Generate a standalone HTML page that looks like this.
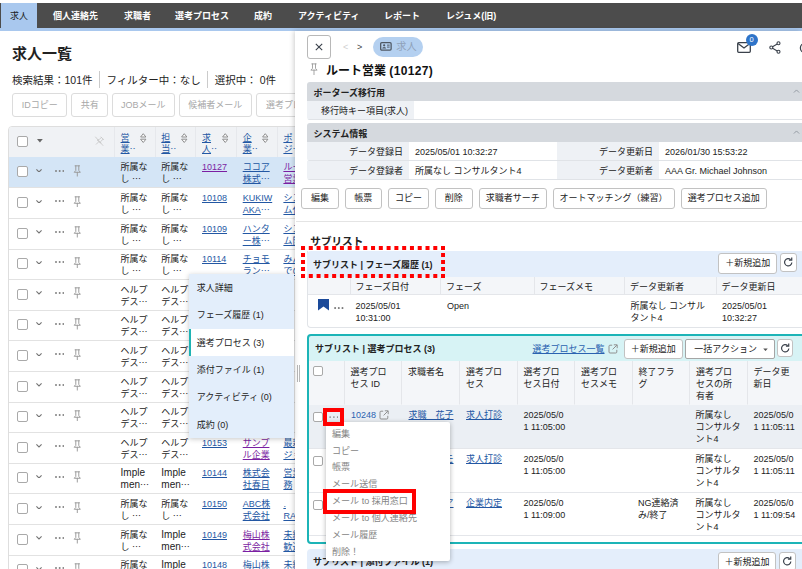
<!DOCTYPE html>
<html lang="ja">
<head>
<meta charset="utf-8">
<title>求人一覧</title>
<style>
*{box-sizing:border-box;margin:0;padding:0}
html,body{width:802px;height:569px;overflow:hidden;background:#fff}
body{font-family:"Liberation Sans","Noto Sans CJK JP",sans-serif;font-size:9px;line-height:11px;color:#222;position:relative}
.abs{position:absolute}
a{color:#2357a3;text-decoration:underline}
a.v{color:#7b1fa2}
svg{display:block}
/* nav */
#nav{position:absolute;left:0;top:3.3px;width:802px;height:24.5px;background:#4c4c4c}
#navline{position:absolute;left:0;top:27.7px;width:802px;height:3.2px;background:#a9c8ee}
#nav span{position:absolute;top:0;height:24.5px;line-height:26.5px;color:#fff;font-weight:700;font-size:9px;white-space:nowrap}
#nav .act{left:1px;width:36px;background:#a9c8ee;color:#222;text-align:center;height:25px;font-weight:400}
/* left */
#ltitle{position:absolute;left:12px;top:42px;font-size:15px;line-height:24px;font-weight:700;color:#222;white-space:nowrap}
#lstat{position:absolute;left:12px;top:70px;font-size:10.5px;line-height:20px;color:#222;white-space:nowrap}
#lstat i{display:inline-block;width:1px;height:17.5px;background:#cbcbcb;vertical-align:middle;margin:0 7px 0 6px;position:relative;top:-1.8px}
.dbtn{position:absolute;top:93px;height:24px;border:1px solid #dcdcdc;border-radius:3px;background:#fff;color:#a8a8a8;font-size:9px;line-height:22px;text-align:center;white-space:nowrap}
#ltab{position:absolute;left:8px;top:126px;width:300px;height:450px;border:1px solid #dedede;border-radius:4px 0 0 0;overflow:hidden}
#lhead{position:absolute;left:0;top:0;width:300px;height:30px;background:#f0f2f5}
.lr{position:absolute;left:0;width:300px;height:31px;box-shadow:inset 0 1px 0 #e2e2e2;background:#fff}
.lr.sel{background:#d4e5f6;box-shadow:none}
.lr span,.lr a,#lhead a,#lhead span{position:absolute;white-space:nowrap;line-height:12px}
.lr span.j,#lhead span.j{position:static}
.cb{position:absolute;width:12px;height:12px;border:1.2px solid #a9a9a9;border-radius:2px;background:#fff}
.sort{width:6.5px;height:10.2px}
.pin{width:8.6px;height:11.6px}
.chev{width:6px;height:3.4px}
.dots{width:9.4px;height:2px}
.j{display:inline-block}
.j.h{width:6px;overflow:hidden;vertical-align:top;height:12px}
.hs{position:absolute;top:0;width:1px;height:30px;background:#e6e8ec}
/* popup */
#pop{position:absolute;left:188.8px;top:273.8px;width:105.5px;height:164.2px;background:#e3eefb;box-shadow:0 1px 5px rgba(0,0,0,.22)}
#pop div{position:absolute;left:0;width:105.5px;height:27.4px;line-height:28px;padding-left:8px;font-size:9px;color:#222;white-space:nowrap}
#pop div.on{background:#fff;border-left:2px solid #1fb3b3;padding-left:6px}
/* right panel */
#rp{position:absolute;left:296px;top:30.9px;width:506px;height:539px;background:#fff;box-shadow:-1px 0 0 #fff,-2px 0 5px rgba(0,0,0,.2)}
#rp>*{margin-top:-30.9px}
#rshadow{display:none}
#grip{position:absolute;left:0.5px;top:364.5px;width:4px;height:17.5px}
#grip i{position:absolute;top:0;width:1px;height:17.5px;background:#b8b8b8}
#grip i+i{left:2px}
#xbtn{position:absolute;left:11px;top:35px;width:24px;height:23.6px;border:1px solid #b8b8b8;border-radius:3px;background:#fff}
#pill{position:absolute;left:77px;top:37.2px;width:50px;height:19.4px;border-radius:10px;background:#b4d0f0}
#pill span{position:absolute;left:23.3px;top:0;line-height:19.8px;font-size:10.2px;color:#8fa1b8;white-space:nowrap}
#rtitle{position:absolute;left:30px;top:61.7px;font-size:12px;line-height:19px;font-weight:700;color:#111;white-space:nowrap}
#badge{position:absolute;left:449.8px;top:33.8px;width:11.8px;height:11.8px;border-radius:6px;background:#2f74c9;color:#fff;font-size:7.5px;line-height:11.8px;text-align:center}
.sech{position:absolute;left:11px;width:495px;height:19.5px;background:#d5d9de;border-radius:3px 0 0 0;padding-left:6.5px;font-weight:700;font-size:9px;line-height:22px;color:#222;white-space:nowrap}
.sech svg{position:absolute;left:486px;top:7px;width:7px;height:4.5px}
.frow{position:absolute;left:11px;width:495px;border-radius:0 0 0 3px;overflow:hidden;height:18.5px}
.frow:after{content:'';position:absolute;left:0;bottom:0;width:100%;height:1px;background:#e0e3e7}
.frow .fl{position:absolute;top:0;height:100%;background:#eef1f5;text-align:right;padding-right:6px;line-height:20px;white-space:nowrap}
.frow .fv{position:absolute;top:0;line-height:20px;white-space:nowrap}
.btn{position:absolute;height:20.6px;border:1px solid #c2c2c2;border-radius:3px;background:#fff;color:#222;font-size:9px;line-height:19.6px;text-align:center;white-space:nowrap}
.btn.rf{width:16.6px;height:18.6px}
.btn.rf svg{position:absolute;left:2.6px;top:3.2px;width:10.4px;height:10.4px}
#sl1{position:absolute;left:11px;top:251.2px;width:495px;height:76.4px;border-left:1px solid #e1e4e8;border-bottom:1px solid #e1e4e8;border-radius:0 0 0 4px;}
#sl1:before{content:'';position:absolute;left:-1px;top:0;width:496px;height:25.8px;background:#e4eefb;border-radius:4px 0 0 0}
.slh{position:absolute;left:5px;top:0;line-height:28px;font-weight:700;font-size:9px;color:#222;white-space:nowrap}
.th{position:absolute;background:#f4f6f9;border-right:1px solid #e4e6ea;border-bottom:1px solid #e4e6ea;padding:5.3px 0 0 6px;line-height:12px;color:#222;white-space:nowrap}
#sl1 .th{padding-top:4.2px;padding-left:5px}
.td{position:absolute;line-height:12px;white-space:nowrap}
#dot1{position:absolute;left:5px;top:246px;width:144.1px;height:31.9px}
#sl2{position:absolute;left:11px;top:334.2px;width:500px;height:209.6px;border:2px solid #1cb4b7;border-radius:4px;background:linear-gradient(#d7f3f5,#d7f3f5) 0 0/100% 25px no-repeat}
#sl2 .slh{line-height:26px;left:6px}
.tr{position:absolute;left:0;width:500px;border-bottom:1px solid #e4e6ea;background:#fff}
.tr.hov{background:#ebeff4}
#sl2 .td{line-height:12px}
.ext{width:10px;height:10px}
#sl3{position:absolute;left:11px;top:548.5px;width:495px;height:30px;background:#e4eefb;border-radius:4px 0 0 0}
#ctx{position:absolute;left:30px;top:422.3px;width:124px;height:139px;background:#fff;border-radius:2px;box-shadow:0 1px 5px rgba(0,0,0,.3);padding-top:3.5px}
#ctx div{height:16.85px;line-height:16.85px;padding-left:6px;color:#858585;font-size:9.05px;white-space:nowrap}
.red{position:absolute;border:3px solid #ff0000}
.rd{width:9.6px;height:2.2px}
.n{font-weight:400;font-size:10px}
#sl2 .th{border-bottom-color:#f4f6f9;height:44.5px !important}
.tr>*{margin-top:-1px}
</style>
</head>
<body>
<div id="nav">
<span class="act">求人</span>
<span style="left:53px">個人連絡先</span>
<span style="left:124px">求職者</span>
<span style="left:175px">選考プロセス</span>
<span style="left:254px">成約</span>
<span style="left:298px">アクティビティ</span>
<span style="left:384px">レポート</span>
<span style="left:446px">レジュメ(旧)</span>
</div>
<div id="navline"></div>

<div id="ltitle">求人一覧</div>
<div id="lstat">検索結果：101件<i></i>フィルター中：なし<i></i>選択中： 0件</div>
<div class="dbtn" style="left:12.2px;width:55.3px">IDコピー</div>
<div class="dbtn" style="left:71.2px;width:37px">共有</div>
<div class="dbtn" style="left:111.5px;width:63.6px">JOBメール</div>
<div class="dbtn" style="left:178.8px;width:73px">候補者メール</div>
<div class="dbtn" style="left:256px;width:80px;text-align:left;padding-left:9px">選考プロセス</div>

<div id="ltab">
<div id="lhead">
<div class="cb" style="left:7.5px;top:8.7px;width:11.5px;height:11.5px"></div>
<svg class="abs" style="left:27.8px;top:12.4px;width:5.8px;height:3.4px" viewBox="0 0 5.8 3.4"><path d="M0 0 H5.8 L2.9 3.4 Z" fill="#666"/></svg>
<svg class="abs" style="left:84.5px;top:8.5px;width:10.5px;height:10.5px" viewBox="0 0 12 12"><g transform="rotate(45 6 6)"><path d="M4 1.2 H8 M4.6 1.2 V5 L3.4 6.6 H8.6 L7.4 5 V1.2 M6 6.6 V10.8" fill="none" stroke="#c6c6c6" stroke-width="0.9" stroke-linecap="round" stroke-linejoin="round"/></g><path d="M1.8 1.2 L10.2 10.8" stroke="#c6c6c6" stroke-width="0.9" stroke-linecap="round"/></svg>
<a style="left:111.6px;top:4.5px">営</a><a style="left:111.6px;top:16.3px">業<span class="j h">⋯</span></a>
<span style="left:131.3px;top:5.9px"><svg class="sort" viewBox="0 0 6.5 10.2"><path d="M3.25 0.7 L5.9 4 H0.6 Z M3.25 9.5 L0.6 6.2 H5.9 Z" fill="#fff" stroke="#8e8e8e" stroke-width="1" stroke-linejoin="round"/></svg></span>
<a style="left:152.3px;top:4.5px">担</a><a style="left:152.3px;top:16.3px">当<span class="j h">⋯</span></a>
<span style="left:172.0px;top:5.9px"><svg class="sort" viewBox="0 0 6.5 10.2"><path d="M3.25 0.7 L5.9 4 H0.6 Z M3.25 9.5 L0.6 6.2 H5.9 Z" fill="#fff" stroke="#8e8e8e" stroke-width="1" stroke-linejoin="round"/></svg></span>
<a style="left:193.0px;top:4.5px">求</a><a style="left:193.0px;top:16.3px">人<span class="j h">⋯</span></a>
<span style="left:212.7px;top:5.9px"><svg class="sort" viewBox="0 0 6.5 10.2"><path d="M3.25 0.7 L5.9 4 H0.6 Z M3.25 9.5 L0.6 6.2 H5.9 Z" fill="#fff" stroke="#8e8e8e" stroke-width="1" stroke-linejoin="round"/></svg></span>
<a style="left:233.7px;top:4.5px">企</a><a style="left:233.7px;top:16.3px">業<span class="j h">⋯</span></a>
<span style="left:253.4px;top:5.9px"><svg class="sort" viewBox="0 0 6.5 10.2"><path d="M3.25 0.7 L5.9 4 H0.6 Z M3.25 9.5 L0.6 6.2 H5.9 Z" fill="#fff" stroke="#8e8e8e" stroke-width="1" stroke-linejoin="round"/></svg></span>
<a style="left:274.4px;top:4.5px">ポ</a><a style="left:274.4px;top:16.3px">ジ<span class="j h">⋯</span></a>
<span style="left:294.1px;top:5.9px"><svg class="sort" viewBox="0 0 6.5 10.2"><path d="M3.25 0.7 L5.9 4 H0.6 Z M3.25 9.5 L0.6 6.2 H5.9 Z" fill="#fff" stroke="#8e8e8e" stroke-width="1" stroke-linejoin="round"/></svg></span>
<i class="hs" style="left:105.0px"></i>
<i class="hs" style="left:145.7px"></i>
<i class="hs" style="left:186.4px"></i>
<i class="hs" style="left:227.1px"></i>
<i class="hs" style="left:267.8px"></i>
</div>
<div class="lr sel" style="top:29.8px">
<div class="cb" style="left:7.5px;top:9.5px;width:11.5px;height:11px"></div>
<span style="left:27px;top:12.3px"><svg class="chev" viewBox="0 0 6 3.4"><path d="M0.4 0.4 L3 3 L5.6 0.4" fill="none" stroke="#747474" stroke-width="1.1"/></svg></span>
<span style="left:45.6px;top:12.8px"><svg class="dots" viewBox="0 0 9.4 2"><circle cx="1" cy="1" r="1" fill="#828282"/><circle cx="4.7" cy="1" r="1" fill="#828282"/><circle cx="8.4" cy="1" r="1" fill="#828282"/></svg></span>
<span style="left:63.8px;top:8.2px"><svg class="pin" viewBox="0 0 10 14"><path d="M2.3 1 H7.7 M3.2 1 V6.6 L1.3 8.8 H8.7 L6.8 6.6 V1 M5 8.8 V13.4" fill="none" stroke="#999" stroke-width="1.15" stroke-linejoin="round" stroke-linecap="round"/></svg></span>
<span style="left:111.6px;top:4.5px">所属な</span><span style="left:111.6px;top:16.5px">し <span class="j">⋯</span></span>
<span style="left:152.3px;top:4.5px">所属な</span><span style="left:152.3px;top:16.5px">し <span class="j">⋯</span></span>
<a class="v" style="left:193.0px;top:4.5px">10127</a>
<a class="" style="left:233.7px;top:4.5px">ココア</a><a class="" style="left:233.7px;top:16.5px">株式<span class="j">⋯</span></a>
<a class="v" style="left:274.4px;top:4.5px">ルート</a><a class="v" style="left:274.4px;top:16.5px">営業</a>
</div>
<div class="lr " style="top:60.4px">
<div class="cb" style="left:7.5px;top:9.5px;width:11.5px;height:11px"></div>
<span style="left:27px;top:12.3px"><svg class="chev" viewBox="0 0 6 3.4"><path d="M0.4 0.4 L3 3 L5.6 0.4" fill="none" stroke="#747474" stroke-width="1.1"/></svg></span>
<span style="left:45.6px;top:12.8px"><svg class="dots" viewBox="0 0 9.4 2"><circle cx="1" cy="1" r="1" fill="#828282"/><circle cx="4.7" cy="1" r="1" fill="#828282"/><circle cx="8.4" cy="1" r="1" fill="#828282"/></svg></span>
<span style="left:63.8px;top:8.2px"><svg class="pin" viewBox="0 0 10 14"><path d="M2.3 1 H7.7 M3.2 1 V6.6 L1.3 8.8 H8.7 L6.8 6.6 V1 M5 8.8 V13.4" fill="none" stroke="#999" stroke-width="1.15" stroke-linejoin="round" stroke-linecap="round"/></svg></span>
<span style="left:111.6px;top:4.5px">所属な</span><span style="left:111.6px;top:16.5px">し <span class="j">⋯</span></span>
<span style="left:152.3px;top:4.5px">所属な</span><span style="left:152.3px;top:16.5px">し <span class="j">⋯</span></span>
<a class="" style="left:193.0px;top:4.5px">10108</a>
<a class="" style="left:233.7px;top:4.5px">KUKIW</a><a class="" style="left:233.7px;top:16.5px">AKA<span class="j">⋯</span></a>
<a class="" style="left:274.4px;top:4.5px">シス</a><a class="" style="left:274.4px;top:16.5px">ム化</a>
</div>
<div class="lr " style="top:91.0px">
<div class="cb" style="left:7.5px;top:9.5px;width:11.5px;height:11px"></div>
<span style="left:27px;top:12.3px"><svg class="chev" viewBox="0 0 6 3.4"><path d="M0.4 0.4 L3 3 L5.6 0.4" fill="none" stroke="#747474" stroke-width="1.1"/></svg></span>
<span style="left:45.6px;top:12.8px"><svg class="dots" viewBox="0 0 9.4 2"><circle cx="1" cy="1" r="1" fill="#828282"/><circle cx="4.7" cy="1" r="1" fill="#828282"/><circle cx="8.4" cy="1" r="1" fill="#828282"/></svg></span>
<span style="left:63.8px;top:8.2px"><svg class="pin" viewBox="0 0 10 14"><path d="M2.3 1 H7.7 M3.2 1 V6.6 L1.3 8.8 H8.7 L6.8 6.6 V1 M5 8.8 V13.4" fill="none" stroke="#999" stroke-width="1.15" stroke-linejoin="round" stroke-linecap="round"/></svg></span>
<span style="left:111.6px;top:4.5px">所属な</span><span style="left:111.6px;top:16.5px">し <span class="j">⋯</span></span>
<span style="left:152.3px;top:4.5px">所属な</span><span style="left:152.3px;top:16.5px">し <span class="j">⋯</span></span>
<a class="" style="left:193.0px;top:4.5px">10109</a>
<a class="" style="left:233.7px;top:4.5px">ハンタ</a><a class="" style="left:233.7px;top:16.5px">ー株<span class="j">⋯</span></a>
<a class="" style="left:274.4px;top:4.5px">シス</a><a class="" style="left:274.4px;top:16.5px">ム開</a>
</div>
<div class="lr " style="top:121.6px">
<div class="cb" style="left:7.5px;top:9.5px;width:11.5px;height:11px"></div>
<span style="left:27px;top:12.3px"><svg class="chev" viewBox="0 0 6 3.4"><path d="M0.4 0.4 L3 3 L5.6 0.4" fill="none" stroke="#747474" stroke-width="1.1"/></svg></span>
<span style="left:45.6px;top:12.8px"><svg class="dots" viewBox="0 0 9.4 2"><circle cx="1" cy="1" r="1" fill="#828282"/><circle cx="4.7" cy="1" r="1" fill="#828282"/><circle cx="8.4" cy="1" r="1" fill="#828282"/></svg></span>
<span style="left:63.8px;top:8.2px"><svg class="pin" viewBox="0 0 10 14"><path d="M2.3 1 H7.7 M3.2 1 V6.6 L1.3 8.8 H8.7 L6.8 6.6 V1 M5 8.8 V13.4" fill="none" stroke="#999" stroke-width="1.15" stroke-linejoin="round" stroke-linecap="round"/></svg></span>
<span style="left:111.6px;top:4.5px">所属な</span><span style="left:111.6px;top:16.5px">し <span class="j">⋯</span></span>
<span style="left:152.3px;top:4.5px">所属な</span><span style="left:152.3px;top:16.5px">し <span class="j">⋯</span></span>
<a class="" style="left:193.0px;top:4.5px">10114</a>
<a class="" style="left:233.7px;top:4.5px">チョモ</a><a class="" style="left:233.7px;top:16.5px">ラン<span class="j">⋯</span></a>
<a class="" style="left:274.4px;top:4.5px">みん</a><a class="" style="left:274.4px;top:16.5px">での</a>
</div>
<div class="lr " style="top:152.2px">
<div class="cb" style="left:7.5px;top:9.5px;width:11.5px;height:11px"></div>
<span style="left:27px;top:12.3px"><svg class="chev" viewBox="0 0 6 3.4"><path d="M0.4 0.4 L3 3 L5.6 0.4" fill="none" stroke="#747474" stroke-width="1.1"/></svg></span>
<span style="left:45.6px;top:12.8px"><svg class="dots" viewBox="0 0 9.4 2"><circle cx="1" cy="1" r="1" fill="#828282"/><circle cx="4.7" cy="1" r="1" fill="#828282"/><circle cx="8.4" cy="1" r="1" fill="#828282"/></svg></span>
<span style="left:63.8px;top:8.2px"><svg class="pin" viewBox="0 0 10 14"><path d="M2.3 1 H7.7 M3.2 1 V6.6 L1.3 8.8 H8.7 L6.8 6.6 V1 M5 8.8 V13.4" fill="none" stroke="#999" stroke-width="1.15" stroke-linejoin="round" stroke-linecap="round"/></svg></span>
<span style="left:111.6px;top:4.5px">ヘルプ</span><span style="left:111.6px;top:16.5px">デス<span class="j">⋯</span></span>
<span style="left:152.3px;top:4.5px">ヘルプ</span><span style="left:152.3px;top:16.5px">デス<span class="j">⋯</span></span>
<a class="" style="left:193.0px;top:4.5px">10115</a>
<a class="" style="left:233.7px;top:4.5px">株式会</a><a class="" style="left:233.7px;top:16.5px">社<span class="j">⋯</span></a>
<a class="" style="left:274.4px;top:4.5px">営</a><a class="" style="left:274.4px;top:16.5px">業</a>
</div>
<div class="lr " style="top:182.8px">
<div class="cb" style="left:7.5px;top:9.5px;width:11.5px;height:11px"></div>
<span style="left:27px;top:12.3px"><svg class="chev" viewBox="0 0 6 3.4"><path d="M0.4 0.4 L3 3 L5.6 0.4" fill="none" stroke="#747474" stroke-width="1.1"/></svg></span>
<span style="left:45.6px;top:12.8px"><svg class="dots" viewBox="0 0 9.4 2"><circle cx="1" cy="1" r="1" fill="#828282"/><circle cx="4.7" cy="1" r="1" fill="#828282"/><circle cx="8.4" cy="1" r="1" fill="#828282"/></svg></span>
<span style="left:63.8px;top:8.2px"><svg class="pin" viewBox="0 0 10 14"><path d="M2.3 1 H7.7 M3.2 1 V6.6 L1.3 8.8 H8.7 L6.8 6.6 V1 M5 8.8 V13.4" fill="none" stroke="#999" stroke-width="1.15" stroke-linejoin="round" stroke-linecap="round"/></svg></span>
<span style="left:111.6px;top:4.5px">ヘルプ</span><span style="left:111.6px;top:16.5px">デス<span class="j">⋯</span></span>
<span style="left:152.3px;top:4.5px">ヘルプ</span><span style="left:152.3px;top:16.5px">デス<span class="j">⋯</span></span>
<a class="" style="left:193.0px;top:4.5px">10116</a>
<a class="" style="left:233.7px;top:4.5px">株式会</a><a class="" style="left:233.7px;top:16.5px">社<span class="j">⋯</span></a>
<a class="" style="left:274.4px;top:4.5px">営</a><a class="" style="left:274.4px;top:16.5px">業</a>
</div>
<div class="lr " style="top:213.4px">
<div class="cb" style="left:7.5px;top:9.5px;width:11.5px;height:11px"></div>
<span style="left:27px;top:12.3px"><svg class="chev" viewBox="0 0 6 3.4"><path d="M0.4 0.4 L3 3 L5.6 0.4" fill="none" stroke="#747474" stroke-width="1.1"/></svg></span>
<span style="left:45.6px;top:12.8px"><svg class="dots" viewBox="0 0 9.4 2"><circle cx="1" cy="1" r="1" fill="#828282"/><circle cx="4.7" cy="1" r="1" fill="#828282"/><circle cx="8.4" cy="1" r="1" fill="#828282"/></svg></span>
<span style="left:63.8px;top:8.2px"><svg class="pin" viewBox="0 0 10 14"><path d="M2.3 1 H7.7 M3.2 1 V6.6 L1.3 8.8 H8.7 L6.8 6.6 V1 M5 8.8 V13.4" fill="none" stroke="#999" stroke-width="1.15" stroke-linejoin="round" stroke-linecap="round"/></svg></span>
<span style="left:111.6px;top:4.5px">ヘルプ</span><span style="left:111.6px;top:16.5px">デス<span class="j">⋯</span></span>
<span style="left:152.3px;top:4.5px">ヘルプ</span><span style="left:152.3px;top:16.5px">デス<span class="j">⋯</span></span>
<a class="" style="left:193.0px;top:4.5px">10117</a>
<a class="" style="left:233.7px;top:4.5px">株式会</a><a class="" style="left:233.7px;top:16.5px">社<span class="j">⋯</span></a>
<a class="" style="left:274.4px;top:4.5px">営</a><a class="" style="left:274.4px;top:16.5px">業</a>
</div>
<div class="lr " style="top:244.0px">
<div class="cb" style="left:7.5px;top:9.5px;width:11.5px;height:11px"></div>
<span style="left:27px;top:12.3px"><svg class="chev" viewBox="0 0 6 3.4"><path d="M0.4 0.4 L3 3 L5.6 0.4" fill="none" stroke="#747474" stroke-width="1.1"/></svg></span>
<span style="left:45.6px;top:12.8px"><svg class="dots" viewBox="0 0 9.4 2"><circle cx="1" cy="1" r="1" fill="#828282"/><circle cx="4.7" cy="1" r="1" fill="#828282"/><circle cx="8.4" cy="1" r="1" fill="#828282"/></svg></span>
<span style="left:63.8px;top:8.2px"><svg class="pin" viewBox="0 0 10 14"><path d="M2.3 1 H7.7 M3.2 1 V6.6 L1.3 8.8 H8.7 L6.8 6.6 V1 M5 8.8 V13.4" fill="none" stroke="#999" stroke-width="1.15" stroke-linejoin="round" stroke-linecap="round"/></svg></span>
<span style="left:111.6px;top:4.5px">ヘルプ</span><span style="left:111.6px;top:16.5px">デス<span class="j">⋯</span></span>
<span style="left:152.3px;top:4.5px">ヘルプ</span><span style="left:152.3px;top:16.5px">デス<span class="j">⋯</span></span>
<a class="" style="left:193.0px;top:4.5px">10118</a>
<a class="" style="left:233.7px;top:4.5px">株式会</a><a class="" style="left:233.7px;top:16.5px">社<span class="j">⋯</span></a>
<a class="" style="left:274.4px;top:4.5px">営</a><a class="" style="left:274.4px;top:16.5px">業</a>
</div>
<div class="lr " style="top:274.6px">
<div class="cb" style="left:7.5px;top:9.5px;width:11.5px;height:11px"></div>
<span style="left:27px;top:12.3px"><svg class="chev" viewBox="0 0 6 3.4"><path d="M0.4 0.4 L3 3 L5.6 0.4" fill="none" stroke="#747474" stroke-width="1.1"/></svg></span>
<span style="left:45.6px;top:12.8px"><svg class="dots" viewBox="0 0 9.4 2"><circle cx="1" cy="1" r="1" fill="#828282"/><circle cx="4.7" cy="1" r="1" fill="#828282"/><circle cx="8.4" cy="1" r="1" fill="#828282"/></svg></span>
<span style="left:63.8px;top:8.2px"><svg class="pin" viewBox="0 0 10 14"><path d="M2.3 1 H7.7 M3.2 1 V6.6 L1.3 8.8 H8.7 L6.8 6.6 V1 M5 8.8 V13.4" fill="none" stroke="#999" stroke-width="1.15" stroke-linejoin="round" stroke-linecap="round"/></svg></span>
<span style="left:111.6px;top:4.5px">ヘルプ</span><span style="left:111.6px;top:16.5px">デス<span class="j">⋯</span></span>
<span style="left:152.3px;top:4.5px">ヘルプ</span><span style="left:152.3px;top:16.5px">デス<span class="j">⋯</span></span>
<a class="" style="left:193.0px;top:4.5px">10119</a>
<a class="" style="left:233.7px;top:4.5px">株式会</a><a class="" style="left:233.7px;top:16.5px">社<span class="j">⋯</span></a>
<a class="" style="left:274.4px;top:4.5px">営</a><a class="" style="left:274.4px;top:16.5px">業</a>
</div>
<div class="lr " style="top:305.2px">
<div class="cb" style="left:7.5px;top:9.5px;width:11.5px;height:11px"></div>
<span style="left:27px;top:12.3px"><svg class="chev" viewBox="0 0 6 3.4"><path d="M0.4 0.4 L3 3 L5.6 0.4" fill="none" stroke="#747474" stroke-width="1.1"/></svg></span>
<span style="left:45.6px;top:12.8px"><svg class="dots" viewBox="0 0 9.4 2"><circle cx="1" cy="1" r="1" fill="#828282"/><circle cx="4.7" cy="1" r="1" fill="#828282"/><circle cx="8.4" cy="1" r="1" fill="#828282"/></svg></span>
<span style="left:63.8px;top:8.2px"><svg class="pin" viewBox="0 0 10 14"><path d="M2.3 1 H7.7 M3.2 1 V6.6 L1.3 8.8 H8.7 L6.8 6.6 V1 M5 8.8 V13.4" fill="none" stroke="#999" stroke-width="1.15" stroke-linejoin="round" stroke-linecap="round"/></svg></span>
<span style="left:111.6px;top:4.5px">ヘルプ</span><span style="left:111.6px;top:16.5px">デス<span class="j">⋯</span></span>
<span style="left:152.3px;top:4.5px">ヘルプ</span><span style="left:152.3px;top:16.5px">デス<span class="j">⋯</span></span>
<a class="" style="left:193.0px;top:4.5px">10153</a>
<a class="v" style="left:233.7px;top:4.5px">サンプ</a><a class="v" style="left:233.7px;top:16.5px">ル企業</a>
<a class="" style="left:274.4px;top:4.5px">最新</a><a class="" style="left:274.4px;top:16.5px">ジョ</a>
</div>
<div class="lr " style="top:335.8px">
<div class="cb" style="left:7.5px;top:9.5px;width:11.5px;height:11px"></div>
<span style="left:27px;top:12.3px"><svg class="chev" viewBox="0 0 6 3.4"><path d="M0.4 0.4 L3 3 L5.6 0.4" fill="none" stroke="#747474" stroke-width="1.1"/></svg></span>
<span style="left:45.6px;top:12.8px"><svg class="dots" viewBox="0 0 9.4 2"><circle cx="1" cy="1" r="1" fill="#828282"/><circle cx="4.7" cy="1" r="1" fill="#828282"/><circle cx="8.4" cy="1" r="1" fill="#828282"/></svg></span>
<span style="left:63.8px;top:8.2px"><svg class="pin" viewBox="0 0 10 14"><path d="M2.3 1 H7.7 M3.2 1 V6.6 L1.3 8.8 H8.7 L6.8 6.6 V1 M5 8.8 V13.4" fill="none" stroke="#999" stroke-width="1.15" stroke-linejoin="round" stroke-linecap="round"/></svg></span>
<span style="left:111.6px;top:4.5px"><b class="n">Imple</b></span><span style="left:111.6px;top:16.5px"><b class="n">men</b><span class="j">⋯</span></span>
<span style="left:152.3px;top:4.5px"><b class="n">Imple</b></span><span style="left:152.3px;top:16.5px"><b class="n">men</b><span class="j">⋯</span></span>
<a class="" style="left:193.0px;top:4.5px">10144</a>
<a class="" style="left:233.7px;top:4.5px">株式会</a><a class="" style="left:233.7px;top:16.5px">社春日</a>
<a class="" style="left:274.4px;top:4.5px">営業</a><a class="" style="left:274.4px;top:16.5px">務</a>
</div>
<div class="lr " style="top:366.4px">
<div class="cb" style="left:7.5px;top:9.5px;width:11.5px;height:11px"></div>
<span style="left:27px;top:12.3px"><svg class="chev" viewBox="0 0 6 3.4"><path d="M0.4 0.4 L3 3 L5.6 0.4" fill="none" stroke="#747474" stroke-width="1.1"/></svg></span>
<span style="left:45.6px;top:12.8px"><svg class="dots" viewBox="0 0 9.4 2"><circle cx="1" cy="1" r="1" fill="#828282"/><circle cx="4.7" cy="1" r="1" fill="#828282"/><circle cx="8.4" cy="1" r="1" fill="#828282"/></svg></span>
<span style="left:63.8px;top:8.2px"><svg class="pin" viewBox="0 0 10 14"><path d="M2.3 1 H7.7 M3.2 1 V6.6 L1.3 8.8 H8.7 L6.8 6.6 V1 M5 8.8 V13.4" fill="none" stroke="#999" stroke-width="1.15" stroke-linejoin="round" stroke-linecap="round"/></svg></span>
<span style="left:111.6px;top:4.5px">所属な</span><span style="left:111.6px;top:16.5px">し <span class="j">⋯</span></span>
<span style="left:152.3px;top:4.5px">所属な</span><span style="left:152.3px;top:16.5px">し <span class="j">⋯</span></span>
<a class="" style="left:193.0px;top:4.5px">10150</a>
<a class="" style="left:233.7px;top:4.5px">ABC株</a><a class="" style="left:233.7px;top:16.5px">式会社</a>
<a class="" style="left:274.4px;top:4.5px">.</a><a class="" style="left:274.4px;top:16.5px">RA</a>
</div>
<div class="lr " style="top:397.0px">
<div class="cb" style="left:7.5px;top:9.5px;width:11.5px;height:11px"></div>
<span style="left:27px;top:12.3px"><svg class="chev" viewBox="0 0 6 3.4"><path d="M0.4 0.4 L3 3 L5.6 0.4" fill="none" stroke="#747474" stroke-width="1.1"/></svg></span>
<span style="left:45.6px;top:12.8px"><svg class="dots" viewBox="0 0 9.4 2"><circle cx="1" cy="1" r="1" fill="#828282"/><circle cx="4.7" cy="1" r="1" fill="#828282"/><circle cx="8.4" cy="1" r="1" fill="#828282"/></svg></span>
<span style="left:63.8px;top:8.2px"><svg class="pin" viewBox="0 0 10 14"><path d="M2.3 1 H7.7 M3.2 1 V6.6 L1.3 8.8 H8.7 L6.8 6.6 V1 M5 8.8 V13.4" fill="none" stroke="#999" stroke-width="1.15" stroke-linejoin="round" stroke-linecap="round"/></svg></span>
<span style="left:111.6px;top:4.5px">所属な</span><span style="left:111.6px;top:16.5px">し <span class="j">⋯</span></span>
<span style="left:152.3px;top:4.5px"><b class="n">Imple</b></span><span style="left:152.3px;top:16.5px"><b class="n">men</b><span class="j">⋯</span></span>
<a class="" style="left:193.0px;top:4.5px">10149</a>
<a class="v" style="left:233.7px;top:4.5px">梅山株</a><a class="v" style="left:233.7px;top:16.5px">式会社</a>
<a class="" style="left:274.4px;top:4.5px">未経</a><a class="" style="left:274.4px;top:16.5px">歓迎</a>
</div>
<div class="lr " style="top:427.6px">
<div class="cb" style="left:7.5px;top:9.5px;width:11.5px;height:11px"></div>
<span style="left:27px;top:12.3px"><svg class="chev" viewBox="0 0 6 3.4"><path d="M0.4 0.4 L3 3 L5.6 0.4" fill="none" stroke="#747474" stroke-width="1.1"/></svg></span>
<span style="left:45.6px;top:12.8px"><svg class="dots" viewBox="0 0 9.4 2"><circle cx="1" cy="1" r="1" fill="#828282"/><circle cx="4.7" cy="1" r="1" fill="#828282"/><circle cx="8.4" cy="1" r="1" fill="#828282"/></svg></span>
<span style="left:63.8px;top:8.2px"><svg class="pin" viewBox="0 0 10 14"><path d="M2.3 1 H7.7 M3.2 1 V6.6 L1.3 8.8 H8.7 L6.8 6.6 V1 M5 8.8 V13.4" fill="none" stroke="#999" stroke-width="1.15" stroke-linejoin="round" stroke-linecap="round"/></svg></span>
<span style="left:111.6px;top:4.5px">所属な</span><span style="left:111.6px;top:16.5px">し <span class="j">⋯</span></span>
<span style="left:152.3px;top:4.5px"><b class="n">Imple</b></span><span style="left:152.3px;top:16.5px"><b class="n">men</b><span class="j">⋯</span></span>
<a class="" style="left:193.0px;top:4.5px">10148</a>
<a class="" style="left:233.7px;top:4.5px">梅山株</a><a class="" style="left:233.7px;top:16.5px">式会社</a>
<a class="" style="left:274.4px;top:4.5px">未経</a><a class="" style="left:274.4px;top:16.5px">歓迎</a>
</div>
</div>
<div id="rp">
<div id="rshadow"></div>
<div id="grip"><i></i><i></i></div>
<!-- header -->
<div id="xbtn"><svg viewBox="0 0 8 8" style="width:8px;height:8px;position:absolute;left:7.4px;top:7.4px"><path d="M0.8 0.8 L7.2 7.2 M7.2 0.8 L0.8 7.2" stroke="#3a414b" stroke-width="1.1" fill="none"/></svg></div>
<span class="abs" style="left:47px;top:41.5px;font-size:9px;line-height:11px;color:#cfcfcf">&lt;</span>
<span class="abs" style="left:61px;top:41.5px;font-size:9px;line-height:11px;color:#444">&gt;</span>
<div id="pill"><svg viewBox="0 0 12 9" style="position:absolute;left:7px;top:5.2px;width:11.8px;height:8.8px"><rect x="0.65" y="0.65" width="10.7" height="7.7" rx="1.1" fill="none" stroke="#4f5864" stroke-width="1.3"/><circle cx="4.2" cy="3.4" r="1.15" fill="#4f5864"/><path d="M2.2 6.7 Q2.2 5 4.2 5 Q6.2 5 6.2 6.7 Z" fill="#4f5864"/><rect x="7.2" y="2.7" width="2.6" height="1" fill="#4f5864"/><rect x="7.2" y="4.7" width="2.6" height="1" fill="#4f5864"/></svg><span>求人</span></div>
<svg class="abs" style="left:14px;top:63px;width:8px;height:12.5px" viewBox="0 0 9 14"><path d="M2 1 H7 M2.8 1 V6 L1 8 H8 L6.2 6 V1 M4.5 8 V13" fill="none" stroke="#9a9a9a" stroke-width="1" stroke-linejoin="round" stroke-linecap="round"/></svg>
<div id="rtitle">ルート営業 <span style="letter-spacing:.35px">(10127)</span></div>
<!-- top-right icons -->
<svg class="abs" style="left:441px;top:42px;width:14px;height:11px" viewBox="0 0 14 11"><rect x="0.7" y="0.7" width="12.6" height="9.6" rx="1" fill="none" stroke="#3a414b" stroke-width="1.3"/><path d="M1 1.5 L7 6 L13 1.5" fill="none" stroke="#3a414b" stroke-width="1.3"/></svg>
<div id="badge">0</div>
<svg class="abs" style="left:473px;top:41px;width:12px;height:13px" viewBox="0 0 12 13"><circle cx="9.5" cy="2.3" r="1.5" fill="none" stroke="#3a414b" stroke-width="1.1"/><circle cx="2.3" cy="6.5" r="1.5" fill="none" stroke="#3a414b" stroke-width="1.1"/><circle cx="9.5" cy="10.7" r="1.5" fill="none" stroke="#3a414b" stroke-width="1.1"/><path d="M3.6 5.7 L8.2 3.1 M3.6 7.3 L8.2 9.9" stroke="#3a414b" stroke-width="1.1" fill="none"/></svg>
<svg class="abs" style="left:503px;top:42px;width:12px;height:12px" viewBox="0 0 12 12"><circle cx="6" cy="6" r="4.6" fill="none" stroke="#3a414b" stroke-width="1.3"/></svg>

<!-- section 1 -->
<div class="sech" style="top:82px;height:19px">ポーターズ移行用<svg viewBox="0 0 8 5"><path d="M1 4 L4 1 L7 4" fill="none" stroke="#8d949c" stroke-width="1"/></svg></div>
<div class="frow" style="top:101px;height:19px"><div class="fl" style="left:0;width:107px">移行時キー項目(求人)</div></div>
<!-- section 2 -->
<div class="sech" style="top:123px;height:19px">システム情報<svg viewBox="0 0 8 5"><path d="M1 4 L4 1 L7 4" fill="none" stroke="#8d949c" stroke-width="1"/></svg></div>
<div class="frow" style="top:142px;height:19px"><div class="fl" style="left:0;width:102px">データ登録日</div><div class="fv" style="left:108px">2025/05/01 10:32:27</div><div class="fl" style="left:250px;width:102px">データ更新日</div><div class="fv" style="left:358px">2026/01/30 15:53:22</div></div>
<div class="frow" style="top:161px;height:19px"><div class="fl" style="left:0;width:102px">データ登録者</div><div class="fv" style="left:108px">所属なし コンサルタント4</div><div class="fl" style="left:250px;width:102px">データ更新者</div><div class="fv" style="left:358px">AAA Gr. Michael Johnson</div></div>
<!-- buttons -->
<div class="btn" style="left:5px;top:188px;width:38px">編集</div>
<div class="btn" style="left:48.5px;top:188px;width:37.5px">帳票</div>
<div class="btn" style="left:92px;top:188px;width:41px">コピー</div>
<div class="btn" style="left:139px;top:188px;width:37.5px">削除</div>
<div class="btn" style="left:182.5px;top:188px;width:68.5px">求職者サーチ</div>
<div class="btn" style="left:256.5px;top:188px;width:122px">オートマッチング（練習）</div>
<div class="btn" style="left:384.5px;top:188px;width:86.5px">選考プロセス追加</div>
<div class="abs" style="left:0;top:220.5px;width:506px;height:1px;background:#e4e4e4"></div>
<div class="abs" style="left:14.3px;top:233.5px;font-size:10.6px;line-height:14px;font-weight:700;color:#222;white-space:nowrap">サブリスト</div>

<!-- sublist 1 -->
<div id="sl1">
<div class="slh">サブリスト | フェーズ履歴 (1)</div>
<div class="btn" style="left:410.4px;top:2.1px;width:58.8px">＋新規追加</div>
<div class="btn rf" style="left:471.7px;top:2.1px;width:17.1px"><svg viewBox="0 0 10 10"><path d="M8.5 5.2 A3.5 3.5 0 1 1 7.4 2.5" fill="none" stroke="#3a414b" stroke-width="1.15"/><path d="M5.7 3.1 H8.4 V0.5" fill="none" stroke="#3a414b" stroke-width="1.15"/></svg></div>
<div class="th" style="left:0;top:25.8px;width:42.5px;height:18px"></div>
<div class="th" style="left:42.5px;top:25.8px;width:90.5px;height:18px">フェーズ日付</div>
<div class="th" style="left:133px;top:25.8px;width:93.5px;height:18px">フェーズ</div>
<div class="th" style="left:226.5px;top:25.8px;width:90.5px;height:18px">フェーズメモ</div>
<div class="th" style="left:317px;top:25.8px;width:91.5px;height:18px">データ更新者</div>
<div class="th" style="left:408.5px;top:25.8px;width:90px;height:18px;border-right:0">データ更新日</div>
<svg class="abs" style="left:10px;top:48px;width:11px;height:11.5px" viewBox="0 0 11 12.5" preserveAspectRatio="none"><path d="M0 0 H11 V12.5 L5.5 8.2 L0 12.5 Z" fill="#1b4a9a"/></svg>
<svg class="abs rd" style="left:26px;top:56px" viewBox="0 0 9.6 2.2"><circle cx="1.1" cy="1.1" r="1" fill="#7a7a7a"/><circle cx="4.8" cy="1.1" r="1" fill="#7a7a7a"/><circle cx="8.5" cy="1.1" r="1" fill="#7a7a7a"/></svg>
<div class="td" style="left:47.5px;top:49px">2025/05/01<br>10:31:00</div>
<div class="td" style="left:139px;top:49px">Open</div>
<div class="td" style="left:322.5px;top:49px">所属なし コンサル<br>タント4</div>
<div class="td" style="left:414px;top:49px">2025/05/01<br>10:32:27</div>
</div>
<svg id="dot1" viewBox="0 0 144.1 31.9"><g stroke="#ff0000" stroke-width="4" fill="none"><path d="M0 2 H144.1" stroke-dasharray="4 3.783"/><path d="M0 29.9 H144.1" stroke-dasharray="4 3.783"/><path d="M2 0 V31.9" stroke-dasharray="4 2.975"/><path d="M142.1 0 V31.9" stroke-dasharray="4 2.975"/></g></svg>

<!-- sublist 2 -->
<div id="sl2">
<div class="slh">サブリスト | 選考プロセス (3)</div>
<a class="abs" style="left:223.5px;top:8px;line-height:11px;white-space:nowrap;color:#2a62b0">選考プロセス一覧</a>
<svg class="abs ext" style="left:298.5px;top:7.5px" viewBox="0 0 10 10"><path d="M4.2 1.2 H2 Q1 1.2 1 2.2 V8 Q1 9 2 9 H7.8 Q8.8 9 8.8 8 V5.8 M5.8 0.8 H9.2 V4.2 M9 1 L4.6 5.4" fill="none" stroke="#909090" stroke-width="1"/></svg>
<div class="btn" style="left:314.5px;top:2.5px;width:59.5px">＋新規追加</div>
<div class="btn" style="left:376.3px;top:2.5px;width:89.7px;padding-right:9px;border-color:#a5a5a5;border-radius:2px">一括アクション<svg viewBox="0 0 6 4" style="position:absolute;right:6px;top:8px;width:5px;height:3.5px"><path d="M0.3 0.4 H5.7 L3 3.6 Z" fill="#555"/></svg></div>
<div class="btn rf" style="left:467.8px;top:2.5px"><svg viewBox="0 0 10 10"><path d="M8.5 5.2 A3.5 3.5 0 1 1 7.4 2.5" fill="none" stroke="#3a414b" stroke-width="1.15"/><path d="M5.7 3.1 H8.4 V0.5" fill="none" stroke="#3a414b" stroke-width="1.15"/></svg></div>
<div class="th" style="left:0;top:24.5px;width:35.5px;height:43.5px"><div class="cb" style="left:4px;top:5.5px;width:10px;height:10px"></div></div>
<div class="th" style="left:35.5px;top:24.5px;width:57.5px;height:43.5px">選考プロ<br>セス ID</div>
<div class="th" style="left:93px;top:24.5px;width:58px;height:43.5px">求職者名</div>
<div class="th" style="left:151px;top:24.5px;width:57.5px;height:43.5px">選考プロ<br>セス</div>
<div class="th" style="left:208.5px;top:24.5px;width:57.5px;height:43.5px">選考プロ<br>セス日付</div>
<div class="th" style="left:266px;top:24.5px;width:57.5px;height:43.5px">選考プロ<br>セスメモ</div>
<div class="th" style="left:323.5px;top:24.5px;width:57.5px;height:43.5px">終了フラ<br>グ</div>
<div class="th" style="left:381px;top:24.5px;width:57.5px;height:43.5px">選考プロ<br>セスの所<br>有者</div>
<div class="th" style="left:438.5px;top:24.5px;width:60px;height:43.5px;border-right:0">データ更<br>新日</div>

<div class="tr hov" style="top:69px;height:44.3px">
<div class="cb" style="left:4px;top:8px;width:10px;height:10px"></div>
<svg class="abs rd" style="left:19.8px;top:11.8px" viewBox="0 0 9.6 2.2"><circle cx="1.1" cy="1.1" r="0.85" fill="#8a8a8a"/><circle cx="4.9" cy="1.1" r="0.85" fill="#8a8a8a"/><circle cx="8.7" cy="1.1" r="0.85" fill="#8a8a8a"/></svg>
<span class="td" style="left:42px;top:4.5px;color:#2a62b0">10248</span>
<svg class="abs ext" style="left:70px;top:6px" viewBox="0 0 10 10"><path d="M4.2 1.2 H2 Q1 1.2 1 2.2 V8 Q1 9 2 9 H7.8 Q8.8 9 8.8 8 V5.8 M5.8 0.8 H9.2 V4.2 M9 1 L4.6 5.4" fill="none" stroke="#909090" stroke-width="1"/></svg>
<a class="td" style="left:99.5px;top:4.5px">求職　花子</a>
<a class="td" style="left:157px;top:4.5px">求人打診</a>
<div class="td" style="left:214.5px;top:4.5px">2025/05/0<br>1 11:05:00</div>
<div class="td" style="left:386.5px;top:4.5px">所属なし<br>コンサルタ<br>ント4</div>
<div class="td" style="left:444.5px;top:4.5px">2025/05/0<br>1 11:05:11</div>
</div>
<div class="tr" style="top:113.3px;height:43.9px">
<div class="cb" style="left:4px;top:8px;width:10px;height:10px"></div>
<span class="td" style="left:42px;top:4.5px;color:#2a62b0">10247</span>
<a class="td" style="left:99.5px;top:4.5px">求職　トモ</a>
<a class="td" style="left:157px;top:4.5px">求人打診</a>
<div class="td" style="left:214.5px;top:4.5px">2025/05/0<br>1 11:05:00</div>
<div class="td" style="left:386.5px;top:4.5px">所属なし<br>コンサルタ<br>ント4</div>
<div class="td" style="left:444.5px;top:4.5px">2025/05/0<br>1 11:05:11</div>
</div>
<div class="tr" style="top:157.2px;height:43.1px">
<div class="cb" style="left:4px;top:8px;width:10px;height:10px"></div>
<span class="td" style="left:42px;top:4.5px;color:#2a62b0">10246</span>
<a class="td" style="left:99.5px;top:4.5px">求職　ノア</a>
<a class="td" style="left:157px;top:4.5px">企業内定</a>
<div class="td" style="left:214.5px;top:4.5px">2025/05/0<br>1 11:09:00</div>
<div class="td" style="left:329px;top:4.5px">NG連絡済<br>み/終了</div>
<div class="td" style="left:386.5px;top:4.5px">所属なし<br>コンサルタ<br>ント4</div>
<div class="td" style="left:444.5px;top:4.5px">2025/05/0<br>1 11:09:54</div>
</div>
</div>

<!-- sublist 3 -->
<div id="sl3">
<div class="slh" style="top:-0.8px;left:6px">サブリスト | 添付ファイル (1)</div>
<div class="btn" style="left:410.6px;top:3.5px;width:58.8px">＋新規追加</div>
<div class="btn rf" style="left:471.9px;top:3.5px;width:17px"><svg viewBox="0 0 10 10"><path d="M8.5 5.2 A3.5 3.5 0 1 1 7.4 2.5" fill="none" stroke="#3a414b" stroke-width="1.15"/><path d="M5.7 3.1 H8.4 V0.5" fill="none" stroke="#3a414b" stroke-width="1.15"/></svg></div>
</div>

<!-- context menu -->
<div id="ctx">
<div>編集</div><div>コピー</div><div>帳票</div><div>メール送信</div><div>メール to 採用窓口</div><div>メール to 個人連絡先</div><div>メール履歴</div><div>削除！</div>
</div>
<div class="red" style="left:26.9px;top:408px;width:21.2px;height:17.7px;border-width:4px"></div>
<div class="red" style="left:27.2px;top:488.9px;width:93px;height:24.7px;border-width:4px"></div>
</div>

<div id="pop">
<div style="top:0">求人詳細</div>
<div style="top:27.4px">フェーズ履歴 (1)</div>
<div class="on" style="top:54.8px">選考プロセス (3)</div>
<div style="top:82.2px">添付ファイル (1)</div>
<div style="top:109.6px">アクティビティ (0)</div>
<div style="top:137px">成約 (0)</div>
</div>
</body>
</html>
